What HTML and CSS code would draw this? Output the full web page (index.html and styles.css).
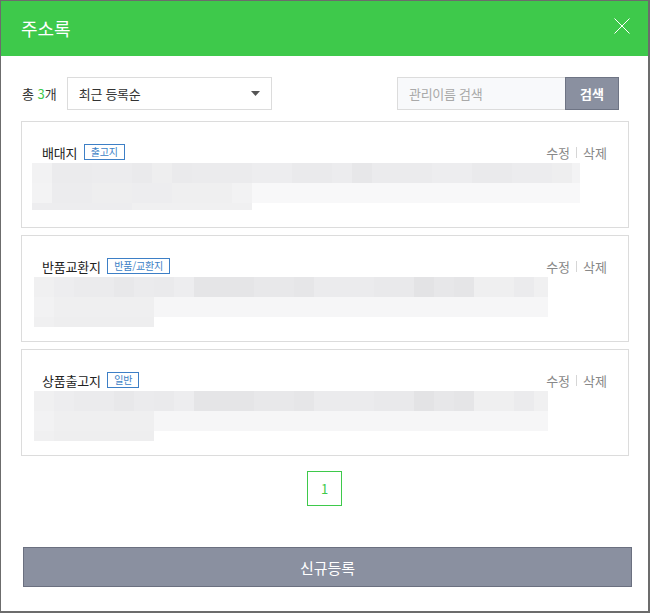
FILE: index.html
```html
<!DOCTYPE html>
<html lang="ko">
<head>
<meta charset="utf-8">
<title>주소록</title>
<link rel="stylesheet" href="styles.css">
</head>
<body>
<div class="modal">
  <header class="modal-head">
    <h1 class="modal-title">주소록</h1>
    <button class="close" aria-label="닫기">
      <svg width="16" height="16" viewBox="0 0 16 16"><path d="M0.5 0.5 L15.5 15.5 M15.5 0.5 L0.5 15.5" stroke="#fff" stroke-width="1" fill="none"/></svg>
    </button>
  </header>
  <div class="modal-body">
    <div class="toolbar">
      <div class="left-tools">
        <span class="total">총 <em>3</em>개</span>
        <div class="select">
          <span>최근 등록순</span>
          <svg width="9" height="5" viewBox="0 0 9 5"><polygon points="0,0 9,0 4.5,5" fill="#555"/></svg>
        </div>
      </div>
      <div class="search">
        <input class="search-input" type="text" placeholder="관리이름 검색">
        <button class="search-btn">검색</button>
      </div>
    </div>

    <ul class="cards">
      <li class="card">
        <div class="card-head">
          <div class="card-name">배대지 <span class="badge">출고지</span></div>
          <div class="actions"><a>수정</a><i class="sep"></i><a>삭제</a></div>
        </div>
        <div class="blur blur-a">
          <div class="b-row r1"></div>
          <div class="b-row r2"></div>
          <div class="b-row r3"></div>
        </div>
      </li>
      <li class="card">
        <div class="card-head">
          <div class="card-name">반품교환지 <span class="badge">반품/교환지</span></div>
          <div class="actions"><a>수정</a><i class="sep"></i><a>삭제</a></div>
        </div>
        <div class="blur blur-b">
          <div class="b-row r1"></div>
          <div class="b-row r2"></div>
          <div class="b-row r3"></div>
        </div>
      </li>
      <li class="card">
        <div class="card-head">
          <div class="card-name">상품출고지 <span class="badge">일반</span></div>
          <div class="actions"><a>수정</a><i class="sep"></i><a>삭제</a></div>
        </div>
        <div class="blur blur-b">
          <div class="b-row r1"></div>
          <div class="b-row r2"></div>
          <div class="b-row r3"></div>
        </div>
      </li>
    </ul>

    <div class="paging"><a class="page on">1</a></div>

    <button class="new-btn">신규등록</button>
  </div>
</div>
</body>
</html>
```

FILE: styles.css
```css
* { box-sizing: border-box; }
html, body { margin: 0; padding: 0; background: #fff; }
body {
  font-family: "Noto Sans CJK KR", "Noto Sans", sans-serif;
  font-size: 13px;
  color: #333;
}
.modal {
  width: 650px;
  height: 613px;
  border: 1px solid #6c6c6c;
  border-right-width: 2px;
  border-bottom-width: 2px;
  background: #fff;
}
.modal-head {
  height: 55px;
  background: #3ec94b;
  display: flex;
  align-items: center;
  justify-content: space-between;
  padding: 0 18px 0 20px;
}
.modal-title {
  margin: 0;
  font-size: 18px;
  font-weight: normal;
  color: #fff;
  line-height: 1;
  letter-spacing: 0;
  margin-top: -2px;
}
.close {
  border: 0;
  background: none;
  padding: 0;
  width: 16px;
  height: 16px;
  display: block;
  margin-top: -6px;
}
.close svg { display: block; }

.modal-body {
  padding: 21px 19px 0 20px;
}
.toolbar {
  display: flex;
  justify-content: space-between;
  align-items: center;
  height: 33px;
  padding: 0 10px 0 1px;
}
.left-tools { display: flex; align-items: center; }
.total { font-size: 13px; color: #333; margin-right: 10px; letter-spacing: 0; }
.total em { font-style: normal; color: #3ec94b; }
.select {
  width: 205px;
  height: 33px;
  border: 1px solid #dcdcdc;
  display: flex;
  align-items: center;
  justify-content: space-between;
  padding: 0 11px 0 11px;
  font-size: 13px;
  color: #333;
  letter-spacing: -0.3px;
}
.select svg { display: block; }
.search { display: flex; height: 33px; }
.search-input {
  width: 168px;
  height: 33px;
  border: 1px solid #dcdcdc;
  border-right: 0;
  background: #f8f9fb;
  padding: 0 11px;
  font-family: inherit;
  font-size: 13px;
  letter-spacing: -0.3px;
  outline: none;
}
.search-input::placeholder { color: #a9a9a9; }
.search-btn {
  width: 54px;
  height: 33px;
  background: #8a90a0;
  border: 1px solid #6e7484;
  color: #fff;
  font-family: inherit;
  font-size: 13px;
  font-weight: bold;
  padding: 0;
}

.cards {
  list-style: none;
  margin: 11px 0 0;
  padding: 0;
  display: flex;
  flex-direction: column;
  gap: 7px;
}
.card {
  height: 107px;
  border: 1px solid #dcdcdc;
  padding: 19px 21px 0 20px;
}
.card-head {
  height: 22px;
  display: flex;
  align-items: center;
  justify-content: space-between;
}
.card-name {
  display: flex;
  align-items: center;
  font-size: 13px;
  color: #222;
  letter-spacing: -0.2px;
  white-space: pre;
}
.badge {
  display: inline-block;
  height: 16px;
  line-height: 14px;
  border: 1px solid #3d7fc6;
  color: #3d7fc6;
  font-size: 10px;
  letter-spacing: -0.2px;
  padding: 0 6px;
  margin-left: 3px;
}
.actions {
  display: flex;
  align-items: center;
  color: #888;
  font-size: 13px;
  letter-spacing: 0;
}
.sep {
  display: inline-block;
  width: 1px;
  height: 11px;
  background: #d6d6d6;
  margin: 0 6px;
}

.blur { margin-left: -10px; }
.blur-b { margin-left: -8px; }
.b-row { height: 20px; }

.blur-a .r1 {
  width: 548px;
  background: linear-gradient(to right,
    #f2f2f3 0 20px, #ebebed 20px 60px, #ececee 60px 100px, #eaeaec 100px 120px,
    #eeeeef 120px 140px, #eaeaec 140px 160px, #ebebed 160px 220px, #ededef 220px 260px,
    #eaeaec 260px 300px, #ececee 300px 320px, #e7e7e9 320px 340px, #ebebed 340px 400px,
    #ededef 400px 440px, #eaeaec 440px 480px, #ececee 480px 520px, #eeeeef 520px 540px, #f3f3f4 540px 548px);
}
.blur-a .r2 {
  width: 548px;
  background: linear-gradient(to right,
    #f3f3f4 0 20px, #ececee 20px 60px, #eeeeef 60px 100px, #ededef 100px 140px,
    #efeff0 140px 200px, #f2f2f3 200px 220px, #f8f8f9 220px 548px);
}
.blur-a .r3 {
  width: 220px;
  height: 7px;
  background: linear-gradient(to right, #ededef 0 100px, #f0f0f1 100px 220px);
}

.blur-b .r1 {
  width: 514px;
  background: linear-gradient(to right,
    #f0f0f1 0 20px, #ededef 20px 40px, #ebebed 40px 80px, #e8e8ea 80px 100px,
    #ebebed 100px 120px, #eaeaec 120px 140px, #ededef 140px 160px, #e5e5e7 160px 220px,
    #e8e8ea 220px 260px, #e6e6e8 260px 280px, #ebebed 280px 340px, #e9e9eb 340px 380px,
    #e3e3e5 380px 400px, #e7e7e9 400px 420px, #e5e5e7 420px 440px, #efeff0 440px 480px,
    #ebebed 480px 500px, #f0f0f1 500px 514px);
}
.blur-b .r2 {
  width: 514px;
  background: linear-gradient(to right,
    #f2f2f3 0 20px, #efeff0 20px 120px, #f6f6f7 120px 514px);
}
.blur-b .r3 {
  width: 120px;
  height: 10px;
  background: linear-gradient(to right, #f0f0f1 0 20px, #eeeeef 20px 120px);
}

.paging {
  display: flex;
  justify-content: center;
  margin-top: 15px;
  padding-right: 1px;
}
.page {
  width: 35px;
  height: 35px;
  border: 1px solid #3ec94b;
  color: #3ec94b;
  font-size: 13px;
  display: flex;
  align-items: center;
  justify-content: center;
}

.new-btn {
  display: block;
  margin: 41px 0 0 2px;
  width: 609px;
  height: 40px;
  background: #8a90a0;
  border: 1px solid #6b7080;
  color: #fff;
  font-family: inherit;
  font-size: 15px;
  letter-spacing: 0;
  padding: 0;
}
```
